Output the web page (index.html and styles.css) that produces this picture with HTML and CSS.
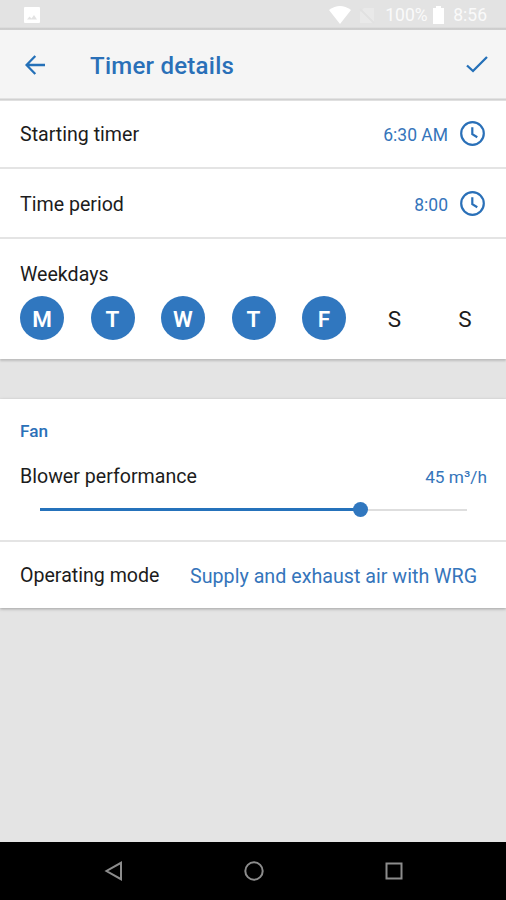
FILE: index.html
```html
<!DOCTYPE html>
<html lang="en">
<head>
    <meta charset="UTF-8">
    <meta name="viewport" content="width=device-width, initial-scale=1.0">
    <title>Timer details</title>
    <link rel="stylesheet" href="styles.css">
</head>
<body>
    <div class="status-bar">
        <svg class="status-image" width="16" height="16" viewBox="0 0 16 16">
            <rect width="16" height="16" rx="1" fill="#fff"/>
            <path d="M3 12.500l2.500-3 2 2 2.500-3.500 3 4.500z" fill="#e3e3e3"/>
        </svg>
        <div class="status-right">
            <svg class="wifi" width="22" height="18" viewBox="0 0 22 18">
                <path d="M0 4Q11-4 22 4L11 18z" fill="#fff"/>
            </svg>
            <svg class="no-sim" width="16" height="17" viewBox="0 0 16 17">
                <path d="M5 1h10v15H1V5z" fill="#e9e9e9"/>
                <path d="M1 2l14 14" stroke="#e1e1e1" stroke-width="2"/>
            </svg>
            <span class="percent">100%</span>
            <svg class="battery" width="11" height="18" viewBox="0 0 11 18">
                <path d="M3 0h5v2h3v16H0V2h3z" fill="#fff"/>
            </svg>
            <span class="clock">8:56</span>
        </div>
    </div>

    <header class="toolbar">
        <svg class="back" width="20" height="20" viewBox="0 0 20 20">
            <path d="M20 10H1.800M10.300 1L1.500 10l8.800 9" fill="none" stroke="#2470b8" stroke-width="2.300"/>
        </svg>
        <h1>Timer details</h1>
        <svg class="check" width="22" height="17" viewBox="0 0 22 17">
            <path d="M1 9.500l6 5.500L21 1" fill="none" stroke="#2470b8" stroke-width="2.300"/>
        </svg>
    </header>

    <main>
        <section class="card">
            <div class="row">
                <label>Starting timer</label>
                <span class="value time">6:30 AM</span>
                <svg class="clock-icon" width="26" height="26" viewBox="0 0 26 26">
                    <circle cx="12.500" cy="12.500" r="11.300"/>
                    <path d="M12.300 6.200v7l5 3"/>
                </svg>
            </div>
            <div class="row period">
                <label>Time period</label>
                <span class="value time">8:00</span>
                <svg class="clock-icon" width="26" height="26" viewBox="0 0 26 26">
                    <circle cx="12.500" cy="12.500" r="11.300"/>
                    <path d="M12.300 6.200v7l5 3"/>
                </svg>
            </div>
            <div class="weekdays">
                <label>Weekdays</label>
                <div class="days">
                    <span class="day active">M</span>
                    <span class="day active">T</span>
                    <span class="day active">W</span>
                    <span class="day active">T</span>
                    <span class="day active">F</span>
                    <span class="day">S</span>
                    <span class="day">S</span>
                </div>
            </div>
        </section>

        <section class="card fan">
            <div class="blower">
                <h2>Fan</h2>
                <div class="blower-head">
                    <label>Blower performance</label>
                    <span class="value flow">45 m³/h</span>
                </div>
                <div class="slider">
                    <div class="slider-fill" style="width: 75%"></div>
                    <div class="slider-thumb"></div>
                    <div class="slider-rest"></div>
                </div>
            </div>
            <div class="row mode">
                <label>Operating mode</label>
                <span class="value">Supply and exhaust air with WRG</span>
            </div>
        </section>
    </main>

    <nav class="nav-bar">
        <svg width="20" height="20" viewBox="0 0 20 20">
            <path d="M17 1.800v16.400L2.500 10z"/>
        </svg>
        <svg width="20" height="20" viewBox="0 0 20 20">
            <circle cx="10" cy="10" r="8.700"/>
        </svg>
        <svg width="20" height="20" viewBox="0 0 20 20">
            <rect x="2.500" y="2.500" width="15" height="15"/>
        </svg>
    </nav>
</body>
</html>
```

FILE: styles.css
```css
* {
    box-sizing: border-box;
}

body {
    margin: 0;
    height: 900px;
    display: flex;
    flex-direction: column;
    font-family: Roboto, sans-serif;
    background: #e4e4e4;
    color: #1c1c1c;
    overflow: hidden;
}

h1,
h2 {
    margin: 0;
    font-weight: 500;
    color: #2a70b8;
}

/* status bar */
.status-bar {
    height: 30px;
    padding: 0 19px 0 24px;
    display: flex;
    align-items: center;
    justify-content: space-between;
    background: linear-gradient(#e3e3e3 27px, #c6c6c6 29px, #d8d8d8);
    color: #fafafa;
}

.status-right {
    display: flex;
    align-items: center;
    font-size: 17.5px;
    line-height: 32px;
}

.no-sim {
    margin-left: 8px;
}

.percent {
    width: 43px;
    margin-left: 10px;
}

.battery {
    margin-left: 5px;
}

.clock {
    margin-left: 9px;
}

/* toolbar */
.toolbar {
    height: 71px;
    padding: 0 18px 2px 25px;
    display: flex;
    align-items: center;
    background: linear-gradient(#f5f5f5 68px, #cfcfcf 69px, #d3d3d3 70px, #ededed);
}

h1 {
    flex: 1;
    margin-left: 45px;
    padding-top: 2px;
    font-size: 24px;
    letter-spacing: 0.25px;
}

/* cards */
.card {
    background: #fff;
    box-shadow: 0 2px 2px #bdbdbd;
}

.fan {
    margin-top: 40px;
    box-shadow: 0 1px 3px #a0a0a0;
}

.row {
    height: 68px;
    padding: 0 20px;
    display: flex;
    align-items: center;
    border-bottom: 2px solid #e4e4e4;
}

.period {
    height: 70px;
    padding-top: 2px;
}

label {
    flex: 1;
    padding-top: 2px;
    font-size: 19.6px;
    line-height: 24px;
}

.value {
    font-size: 19.7px;
    color: #3575bb;
}

.time {
    margin-right: 12px;
    padding-top: 1px;
    font-size: 17.5px;
}

.clock-icon {
    fill: none;
    stroke: #2a70b8;
    stroke-width: 2.2;
}

.weekdays {
    height: 120px;
    padding: 22px 20px 0;
}

.weekdays label {
    display: block;
}

.days {
    display: flex;
    justify-content: space-between;
    margin: 9px -1px 0 0;
}

.day {
    width: 44px;
    height: 44px;
    line-height: 46px;
    border-radius: 50%;
    text-align: center;
    font-size: 22.5px;
}

.active {
    background: #3077bf;
    color: #fff;
    font-weight: 600;
}

/* fan settings */
.blower {
    height: 143px;
    padding: 20px 19px 0 20px;
    border-bottom: 2px solid #e4e4e4;
}

h2 {
    font-size: 17.2px;
    line-height: 24px;
}

.blower-head {
    display: flex;
    align-items: center;
    margin-top: 20px;
}

.flow {
    padding-top: 2px;
    font-size: 17.3px;
}

.slider {
    display: flex;
    align-items: center;
    height: 15px;
    margin: 13px 20px 0;
}

.slider-fill {
    height: 3px;
    background: #2572bb;
}

.slider-thumb {
    flex: none;
    width: 15px;
    height: 15px;
    margin: 0 -7px;
    border-radius: 50%;
    background: #3077bf;
    z-index: 1;
}

.slider-rest {
    flex: 1;
    height: 2px;
    background: #dedede;
}

.mode {
    height: 66px;
    border: 0;
}

.mode label {
    flex: none;
    width: 170px;
}

.mode .value {
    padding-top: 2px;
}

/* android navigation */
.nav-bar {
    height: 58px;
    margin-top: auto;
    padding: 0 102px 0 104px;
    display: flex;
    align-items: center;
    justify-content: space-between;
    background: #000;
}

.nav-bar svg {
    fill: none;
    stroke: #8c8c8c;
    stroke-width: 2;
}
```
